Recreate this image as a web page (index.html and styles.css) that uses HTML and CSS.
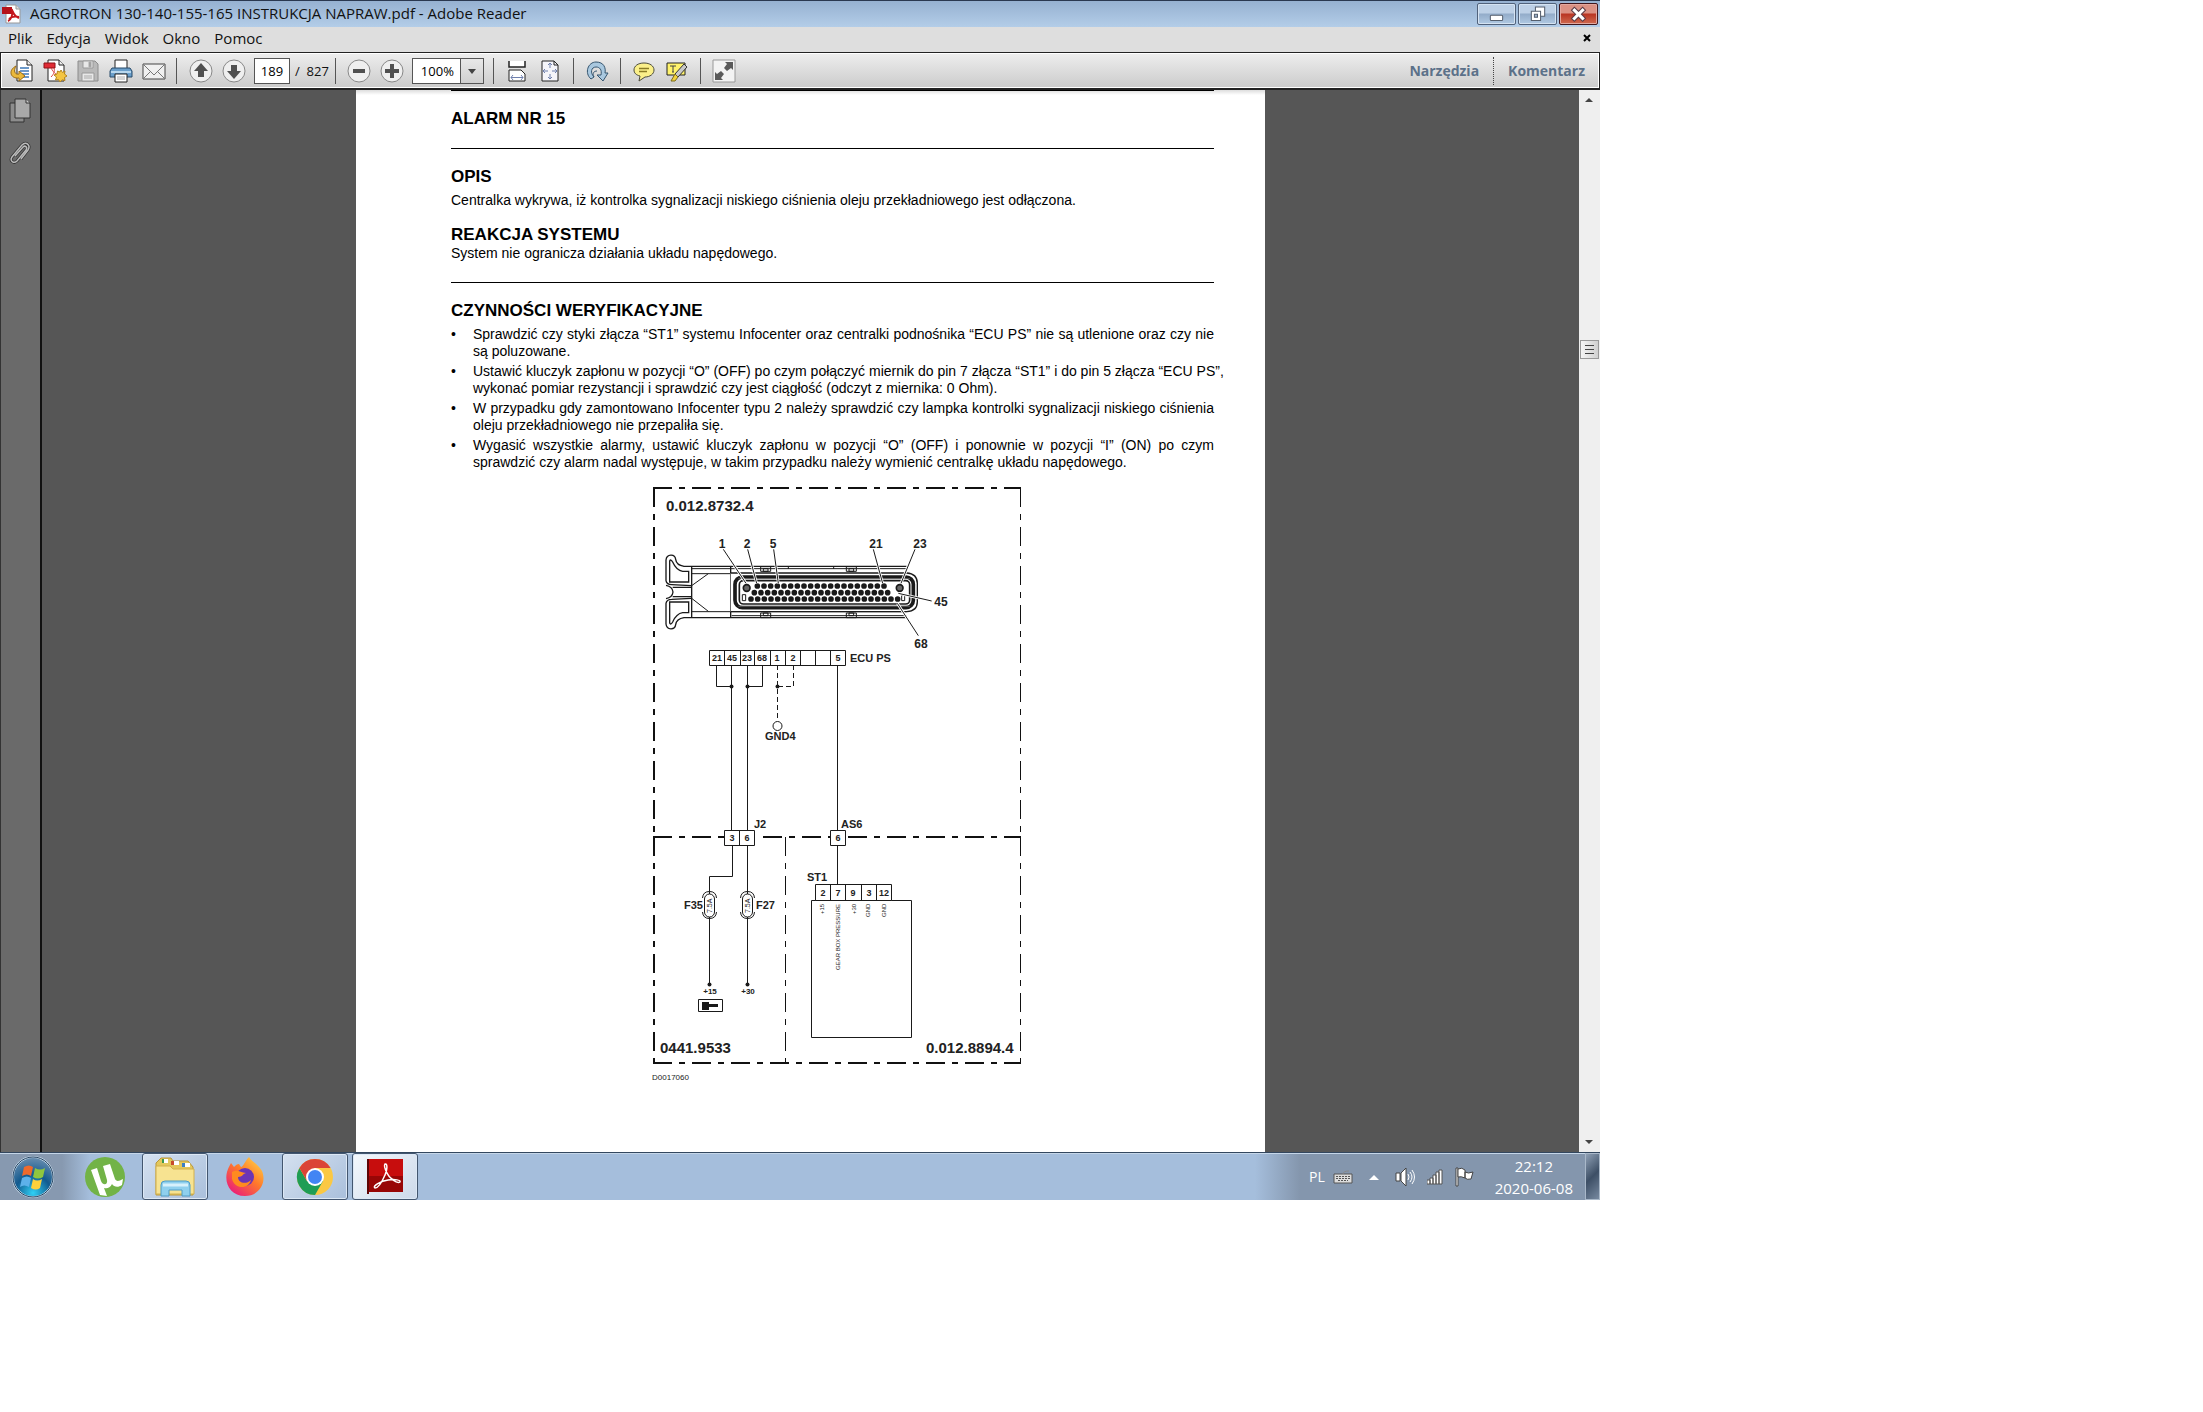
FILE: index.html
```
<!DOCTYPE html>
<html lang="pl">

<head>
    <meta charset="UTF-8">
    <meta name="viewport" content="width=device-width, initial-scale=1.0">
    <title>AGROTRON 130-140-155-165 INSTRUKCJA NAPRAW.pdf - Adobe Reader</title>
    <link rel="stylesheet" href="styles.css">
</head>

<body>
    <div class="desktop">
        <header class="titlebar">
            <svg class="app_icon" viewBox="0 0 20 20">
                <path d="M4 1h10l4 4v14H4z" fill="#fff" stroke="#999" />
                <path d="M14 1v4h4" fill="#ddd" stroke="#999" />
                <path d="M0 3h10v7H0z" fill="#b5121b" />
                <path d="M9 5c2 0 1 6 8 9M6 17c3-1 5-6 4-11M7 15c3-3 6-3 10-2" fill="none" stroke="#c4161c" stroke-width="2" />
            </svg>
            <span class="title">AGROTRON 130-140-155-165 INSTRUKCJA NAPRAW.pdf - Adobe Reader</span>
            <div class="window_buttons">
                <button aria-label="Minimalizuj"><svg viewBox="0 0 36 20"><rect x="12" y="11" width="12" height="5" rx="1" fill="#fff" stroke="#555f6e" /></svg></button>
                <button aria-label="Przywróć"><svg viewBox="0 0 36 20"><path d="M16 3h9v9h-9z" fill="#fff" stroke="#555f6e" /><path d="M12 7h9v9h-9z" fill="#fff" stroke="#555f6e" /><path d="M15 10h3v3h-3z" fill="#9fb4cc" stroke="#555f6e" /></svg></button>
                <button class="close" aria-label="Zamknij"><svg viewBox="0 0 36 20"><path d="M14 6l8 8M22 6l-8 8" stroke="#5b3b46" stroke-width="5" stroke-linecap="square" /><path d="M14 6l8 8M22 6l-8 8" stroke="#fff" stroke-width="3" stroke-linecap="square" /></svg></button>
            </div>
        </header>

        <nav class="menu">
            <button>Plik</button>
            <button>Edycja</button>
            <button>Widok</button>
            <button>Okno</button>
            <button>Pomoc</button>
            <button class="close_doc" aria-label="Zamknij dokument"><svg viewBox="0 0 8 8"><path d="M1 1l6 6M7 1L1 7" stroke="#000" stroke-width="2" /></svg></button>
        </nav>

        <div class="toolbar">
            <button aria-label="Otwórz">
                <svg viewBox="0 0 24 24">
                    <path d="M7 1h10l5 5v16H7z" fill="#fff" stroke="#222" />
                    <path d="M17 1v5h5" fill="#eee" stroke="#222" />
                    <path d="M10 9h9M10 12h9M10 15h9M12 18h7" stroke="#3d78b8" stroke-width="1.5" />
                    <path d="M6 7C-2 11 0 20 9 19v3l6-5-6-5v3c-4 1-6-3-3-8z" fill="#eab93c" stroke="#9a6b14" />
                </svg>
            </button>
            <button aria-label="Utwórz PDF">
                <svg viewBox="0 0 24 24">
                    <path d="M5 1h11l5 5v16H5z" fill="#fff" stroke="#222" />
                    <path d="M16 1v5h5" fill="#eee" stroke="#222" />
                    <path d="M1 4h11v5H1z" fill="#e02b35" stroke="#8d1218" />
                    <path d="M8 9c3 5 5 7 8 7M8 18c3-3 4-6 3-9" fill="none" stroke="#d44" />
                    <path d="M18 11l1.500 2.500L22 12l-.5 3L24 17l-2.500 1.500.5 3-3-.7L17 23l-1.500-2.500-3 .5 1-3L11 16l3-1 .5-3 2.500 1z" fill="#f4c542" stroke="#b5841b" />
                </svg>
            </button>
            <button aria-label="Zapisz" disabled>
                <svg viewBox="0 0 24 24">
                    <path d="M2 2h17l3 3v17H2z" fill="#b9b9b9" stroke="#8c8c8c" />
                    <path d="M7 2h10v7H7zM6 14h12v8H6z" fill="#e8e8e8" stroke="#999" />
                    <path d="M13 3h2v5h-2zM8 17h8M8 19h8" fill="#999" stroke="#aaa" />
                </svg>
            </button>
            <button aria-label="Drukuj">
                <svg viewBox="0 0 24 24">
                    <path d="M6 1h12v9H6z" fill="#fff" stroke="#222" />
                    <path d="M3 9h18l2 3v6H1v-6z" fill="#6a9fcb" stroke="#294a68" />
                    <path d="M2 13h20" stroke="#b9d8ee" stroke-width="2" />
                    <path d="M6 15h12v8H6z" fill="#fff" stroke="#222" />
                    <path d="M8 18h8M8 20h8" stroke="#aaa" />
                </svg>
            </button>
            <button aria-label="Wyślij e-mail">
                <svg viewBox="0 0 24 24">
                    <path d="M1 5h22v15H1z" fill="#f0f0f0" stroke="#444" />
                    <path d="M1 20l8-8M23 20l-8-8M1 5l11 11L23 5" fill="none" stroke="#777" />
                </svg>
            </button>
            <span class="sep"></span>
            <button aria-label="Poprzednia strona">
                <svg viewBox="0 0 24 24">
                    <circle cx="12" cy="12" r="11" fill="#efefef" stroke="#888" />
                    <path d="M12 4l7 8h-4v6H9v-6H5z" fill="#505050" />
                </svg>
            </button>
            <button aria-label="Następna strona">
                <svg viewBox="0 0 24 24">
                    <circle cx="12" cy="12" r="11" fill="#efefef" stroke="#888" />
                    <path d="M12 20l7-8h-4V6H9v6H5z" fill="#505050" />
                </svg>
            </button>
            <input class="page_nr" type="text" value="189" aria-label="Numer strony">
            <span class="pages">/&nbsp; 827</span>
            <span class="sep"></span>
            <button aria-label="Pomniejsz">
                <svg viewBox="0 0 24 24">
                    <circle cx="12" cy="12" r="11" fill="#efefef" stroke="#888" />
                    <path d="M6 10h12v4H6z" fill="#505050" />
                </svg>
            </button>
            <button aria-label="Powiększ">
                <svg viewBox="0 0 24 24">
                    <circle cx="12" cy="12" r="11" fill="#efefef" stroke="#888" />
                    <path d="M10 5h4v5h5v4h-5v5h-4v-5H5v-4h5z" fill="#505050" />
                </svg>
            </button>
            <div class="zoom">
                <select aria-label="Powiększenie">
                    <option>100%</option>
                </select>
                <svg viewBox="0 0 22 24"><path d="M7 10h8l-4 5z" fill="#444" /></svg>
            </div>
            <span class="sep"></span>
            <button aria-label="Dopasuj szerokość">
                <svg viewBox="0 0 24 24">
                    <path d="M4 2v6h16V2" fill="#fff" stroke="#222" stroke-width="1.500" />
                    <path d="M4 22V11h12l4 4v7z" fill="#fff" stroke="#222" />
                    <path d="M6 18.500h12M8 16l-2 2.500L8 21M16 16l2 2.500-2 2.500" fill="none" stroke="#6f80ad" />
                </svg>
            </button>
            <button aria-label="Dopasuj stronę">
                <svg viewBox="0 0 24 24">
                    <path d="M4 2h12l4 4v16H4z" fill="#f5f5fa" stroke="#222" />
                    <path d="M16 2v4h4" fill="none" stroke="#222" />
                    <path d="M12 4v5M10 6l2-2 2 2M12 15v5M10 18l2 2 2-2M5 12h5M7 10l-2 2 2 2M14 12h5M17 10l2 2-2 2" fill="none" stroke="#6f80ad" />
                </svg>
            </button>
            <span class="sep"></span>
            <button aria-label="Obróć">
                <svg viewBox="0 0 24 24">
                    <path d="M6 20C-1 14 3 3 11 3c8 0 10 6 9 11l3 0-5 8-6-6h4c1-5-1-8-5-8-5 0-6 6-2 10z" fill="#a9c8df" stroke="#35556f" />
                    <path d="M9 18c-2-4 0-6 3-6" fill="none" stroke="#35556f" />
                </svg>
            </button>
            <span class="sep"></span>
            <button aria-label="Dodaj notatkę">
                <svg viewBox="0 0 24 24">
                    <path d="M12 4c6 0 10 3 10 7s-4 7-9 7l-6 4 1-5c-4-1-6-3-6-6 0-4 4-7 10-7z" fill="#fbf08a" stroke="#4b4b3a" />
                    <path d="M7 9.500h10M7 12.500h8" stroke="#8a7b25" stroke-width="1.500" />
                </svg>
            </button>
            <button aria-label="Wyróżnij tekst">
                <svg viewBox="0 0 24 24">
                    <path d="M2 4h18v12H2z" fill="#fff36b" stroke="#222" />
                    <path d="M5 7h6M8 7v6M7 13h2" stroke="#444" />
                    <path d="M19 5l3 3-9 10-3-3z" fill="#c9c9c9" stroke="#333" />
                    <path d="M10 15l3 3-3 4-4 0z" fill="#f2d33c" stroke="#7a6a1a" />
                </svg>
            </button>
            <span class="sep"></span>
            <button aria-label="Tryb czytania">
                <svg viewBox="0 0 24 24">
                    <path d="M1 1h22v22H1z" fill="#f3f3f3" stroke="#999" />
                    <path d="M13 3h8v8l-2-2-4 3-3-3 3-4zM11 21H3v-8l2 2 4-3 3 3-3 4z" fill="#5a5a5a" />
                </svg>
            </button>
            <div class="panels">
                <button>Narzędzia</button>
                <button>Komentarz</button>
            </div>
        </div>

        <div class="viewer">
            <aside class="sidebar">
                <button aria-label="Miniatury stron">
                    <svg viewBox="0 0 24 26">
                        <path d="M2 5h14v19H2z" fill="#8d8d8d" stroke="#333" />
                        <path d="M7 1h11l4 4v15H7z" fill="#a9a9a9" stroke="#333" />
                        <path d="M18 1v4h4" fill="#ccc" stroke="#333" />
                    </svg>
                </button>
                <button aria-label="Załączniki">
                    <svg viewBox="0 0 24 26">
                        <path d="M7 16l8-9c2-2 5 0 3 3l-9 11c-3 3-8 0-5-4L14 5c4-4 9 0 6 5l-7 9" fill="none" stroke="#333" stroke-width="3" />
                        <path d="M7 16l8-9c2-2 5 0 3 3l-9 11c-3 3-8 0-5-4L14 5c4-4 9 0 6 5l-7 9" fill="none" stroke="#bbb" stroke-width="1.500" />
                    </svg>
                </button>
            </aside>

            <main class="document">
                <article class="page">
                    <h1>ALARM NR 15</h1>
                    <hr>
                    <h2>OPIS</h2>
                    <p class="spaced">Centralka wykrywa, iż kontrolka sygnalizacji niskiego ciśnienia oleju przekładniowego jest odłączona.</p>
                    <h2 class="reaction">REAKCJA SYSTEMU</h2>
                    <p>System nie ogranicza działania układu napędowego.</p>
                    <hr>
                    <h2>CZYNNOŚCI WERYFIKACYJNE</h2>
                    <ul>
                        <li>Sprawdzić czy styki złącza “ST1” systemu Infocenter oraz centralki podnośnika “ECU PS” nie są utlenione oraz czy nie są poluzowane.</li>
                        <li><div class="one_line">Ustawić kluczyk zapłonu w pozycji “O” (OFF) po czym połączyć miernik do pin 7 złącza “ST1” i do pin 5 złącza “ECU PS”,<br>wykonać pomiar rezystancji i sprawdzić czy jest ciągłość (odczyt z miernika: 0 Ohm).</div></li>
                        <li>W przypadku gdy zamontowano Infocenter typu 2 należy sprawdzić czy lampka kontrolki sygnalizacji niskiego ciśnienia oleju przekładniowego nie przepaliła się.</li>
                        <li>Wygasić wszystkie alarmy, ustawić kluczyk zapłonu w pozycji “O” (OFF) i ponownie w pozycji “I” (ON) po czym sprawdzić czy alarm nadal występuje, w takim przypadku należy wymienić centralkę układu napędowego.</li>
                    </ul>

                    <svg class="diagram" viewBox="643 480 379 610">
                        <!-- frame -->
                        <g class="frame">
                            <path d="M653 488H1021" />
                            <path d="M654 488V837" />
                            <path d="M654 837V1064" />
                            <path d="M653 837H724" />
                            <path d="M757 837H830" stroke-dashoffset="33" />
                            <path d="M848 837H1021" />
                            <path d="M653 1063H1021" />
                            <path class="thin" d="M1020.500 488V837" />
                            <path class="thin" d="M1020.500 837V1064" />
                            <path class="thin" d="M785.500 837V1064" />
                        </g>

                        <!-- connector, drawn at three times its size -->
                        <g class="connector" transform="translate(640 480) scale(.33333)">
                            <g id="handle">
                                <path d="M153 259H132C114 256 108 246 107 238C105 221 80 221 78 240V302Q80 314 95 314L153 317" />
                                <path d="M89 243Q92 236 98 246C106 264 114 272 128 274H146V306H89z" />
                                <path d="M78 316C94 319 98 326 99 336M98 322H153" />
                            </g>
                            <use href="#handle" transform="translate(0 672) scale(1 -1)" />
                            <path d="M153 259H800M155 259V413M272 259V413M153 413H800" />
                            <path class="fine" d="M153 266H800M153 281H800M153 395H800M275 407H800M155 317L205 281M155 355L205 394" />
                            <path class="fine" d="M362 260h30v14h-30zM370 266h14v8h-14zM619 260h30v14h-30zM627 266h14v8h-14zM362 399h30v14h-30zM370 399h14v8h-14zM619 399h30v14h-30zM627 399h14v8h-14zM445 259v8M581 259v8M442 281h12v6h-12zM442 388h12v6h-12z" />
                            <path d="M272 279H800Q832 281 832 310V365Q832 393 800 395H272" fill="#fff" />
                            <rect x="285" y="291" width="535" height="92" rx="22" stroke-width="11" />
                            <rect x="298" y="302" width="511" height="70" rx="12" stroke-width="5" />
                            <path d="M295 296H810M295 379H810" stroke="#777" stroke-width="2" />
                            <g class="pins">
                                <path d="M352 318H752" />
                                <path d="M343 338H763" />
                                <path d="M333 357H775" />
                            </g>
                            <circle cx="320" cy="324" r="10" fill="#666" stroke-width="5" />
                            <circle cx="779" cy="324" r="10" fill="#666" stroke-width="5" />
                            <path class="fine" d="M307 344h10v18h-10zM785 346h9v16h-9z" />
                            <path class="halo" d="M250 208L318 310M323 208L350 310M401 208L415 310M700 208L728 310M825 208L783 310M875 363L775 340M835 467L772 370" />
                            <path class="fine" d="M250 208L318 310M323 208L350 310M401 208L415 310M700 208L728 310M825 208L783 310M875 363L775 340M835 467L772 370" />
                        </g>

                        <!-- wires -->
                        <g class="wires">
                            <path d="M716.500 665V686.500H731.500M762.500 665V686.500H747.500" />
                            <path d="M731.500 665V830M747.500 665V830M837.500 665V830" />
                            <path class="dashed" d="M777.500 665V721" />
                            <path class="dashed" d="M793.500 665V686.500H778" />
                            <circle cx="777.500" cy="726" r="4.500" />
                            <path d="M732.500 845V876.500H709.500V894M747.500 845V894M709.500 917V984M747.500 917V984M837.500 845V884" />
                        </g>

                        <!-- terminals -->
                        <g class="boxes">
                            <path d="M709.500 650.500H845.500V665.500H709.500z" />
                            <path d="M724.500 650V665M740.500 650V665M754.500 650V665M770.500 650V665M785.500 650V665M800.500 650V665M815.500 650V665M830.500 650V665" />
                            <path d="M724.500 830.500H754.500V845.500H724.500zM739.500 830V845" />
                            <path d="M830.500 830.500H845.500V845.500H830.500z" />
                            <path d="M811.500 900.500H911.500V1037.500H811.500z" />
                            <path d="M815.500 884.500H891.500V900.500H815.500zM830.500 884V900M845.500 884V900M861.500 884V900M876.500 884V900" />
                            <path d="M698.500 999.500H722.500V1011.500H698.500z" />
                        </g>
                        <g class="dots">
                            <circle cx="731.500" cy="686.500" r="2" />
                            <circle cx="747.500" cy="686.500" r="2" />
                            <circle cx="777.500" cy="686.500" r="2" />
                            <circle cx="709.500" cy="984.500" r="2" />
                            <circle cx="747.500" cy="984.500" r="2" />
                            <path d="M702 1002h7v2h9v3h-9v3h-7z" />
                        </g>
                        <g class="fuse">
                            <rect x="704.500" y="894" width="10" height="23" rx="5" />
                            <path d="M702.500 898Q703 891.500 709.500 891.500T716.500 898M702.500 912Q703 918.500 709.500 918.500T716.500 912" />
                            <rect x="742.500" y="894" width="10" height="23" rx="5" />
                            <path d="M740.500 898Q741 891.500 747.500 891.500T754.500 898M740.500 912Q741 918.500 747.500 918.500T754.500 912" />
                        </g>

                        <!-- captions -->
                        <g class="number">
                            <text x="666" y="511">0.012.8732.4</text>
                            <text x="660" y="1053">0441.9533</text>
                            <text x="926" y="1053">0.012.8894.4</text>
                        </g>
                        <g class="pin_nr">
                            <text x="722" y="548">1</text>
                            <text x="747" y="548">2</text>
                            <text x="773" y="548">5</text>
                            <text x="876" y="548">21</text>
                            <text x="920" y="548">23</text>
                            <text x="941" y="606">45</text>
                            <text x="921" y="648">68</text>
                        </g>
                        <g class="box_nr">
                            <text x="717" y="661">21</text>
                            <text x="732" y="661">45</text>
                            <text x="747" y="661">23</text>
                            <text x="762" y="661">68</text>
                            <text x="777" y="661">1</text>
                            <text x="793" y="661">2</text>
                            <text x="838" y="661">5</text>
                            <text x="732" y="841">3</text>
                            <text x="747" y="841">6</text>
                            <text x="838" y="841">6</text>
                            <text x="823" y="896">2</text>
                            <text x="838" y="896">7</text>
                            <text x="853" y="896">9</text>
                            <text x="869" y="896">3</text>
                            <text x="884" y="896">12</text>
                        </g>
                        <g class="label">
                            <text x="850" y="662">ECU PS</text>
                            <text x="765" y="740">GND4</text>
                            <text x="754" y="828">J2</text>
                            <text x="841" y="828">AS6</text>
                            <text x="807" y="881">ST1</text>
                            <text x="684" y="909">F35</text>
                            <text x="756" y="909">F27</text>
                        </g>
                        <g class="supply">
                            <text x="710" y="994">+15</text>
                            <text x="748" y="994">+30</text>
                        </g>
                        <g class="rating">
                            <text transform="translate(712 913) rotate(-90)">7.5A</text>
                            <text transform="translate(750 913) rotate(-90)">7.5A</text>
                        </g>
                        <g class="signal_name">
                            <text transform="translate(824 914) rotate(-90)">+15</text>
                            <text transform="translate(840 970) rotate(-90)">GEAR BOX PRESSURE</text>
                            <text transform="translate(856 914) rotate(-90)">+30</text>
                            <text transform="translate(870 917) rotate(-90)">GND</text>
                            <text transform="translate(886 917) rotate(-90)">GND</text>
                        </g>
                        <text class="drawing_nr" x="652" y="1080">D0017060</text>
                    </svg>
                </article>
            </main>

            <div class="scrollbar">
                <svg viewBox="0 0 21 20"><path d="M6 12h8l-4-4z" fill="#444" /></svg>
                <div class="thumb"><span></span><span></span><span></span></div>
                <svg viewBox="0 0 21 20"><path d="M6 8h8l-4 4z" fill="#444" /></svg>
            </div>
        </div>

        <footer class="taskbar">
            <button class="start" aria-label="Start">
                <svg viewBox="0 0 44 44">
                    <defs>
                        <radialGradient id="orb" cx=".5" cy=".9" r=".9">
                            <stop offset="0" stop-color="#2fd0f5" />
                            <stop offset=".5" stop-color="#125a8f" />
                            <stop offset="1" stop-color="#6c8fb0" />
                        </radialGradient>
                    </defs>
                    <circle cx="22" cy="22" r="20" fill="url(#orb)" stroke="#cfe3f2" stroke-width="2" />
                    <circle cx="22" cy="22" r="20" fill="none" stroke="#23415f" />
                    <path d="M13 12q5-3 9 0l-2 9q-4-3-9 0z" fill="#ee6a2c" />
                    <path d="M24 13q5 3 10 0l-2 9q-5 3-10 0z" fill="#8fc63f" />
                    <path d="M11 23q5-3 9 0l-2 9q-5-3-9 0z" fill="#5db1ea" />
                    <path d="M22 24q4 3 9 0l-2 9q-4 3-9 0z" fill="#fcd13a" />
                </svg>
            </button>
            <button aria-label="µTorrent">
                <svg viewBox="0 0 44 44">
                    <circle cx="22" cy="22" r="20" fill="#72b347" />
                    <path d="M8 15l6-2 4 13c2 5 7 4 6-1l-4-14 7-2 5 15c1 2 3 3 8 0l-1 6c-4 3-8 2-10-1-2 4-5 5-8 4l3 8-7-1z" fill="#fff" />
                </svg>
            </button>
            <button class="open" aria-label="Eksplorator Windows">
                <svg viewBox="0 0 44 44">
                    <path d="M5 6l3-3h10l2 3h15l5 6v28H3V8z" fill="#e3c85c" stroke="#b9963a" />
                    <path d="M9 4h6v4H9zM18 6h8v4h-8zM29 8h8v4h-8z" fill="#fff" />
                    <path d="M9 4h2v4H9z" fill="#3c9a4b" />
                    <path d="M18 6h3v4h-3z" fill="#c74b2c" />
                    <path d="M29 8h3v4h-3z" fill="#3c7fc4" />
                    <path d="M3 11h14l3 3h21v25H3z" fill="#f7e391" stroke="#d2b04c" />
                    <path d="M8 41V30q0-4 4-4h21q4 0 4 4v11h-8v-6H16v6z" fill="#8fd0ee" stroke="#4f9cc6" />
                    <path d="M10 30h25" stroke="#d6f1fc" stroke-width="3" />
                </svg>
            </button>
            <button aria-label="Firefox">
                <svg viewBox="0 0 44 44">
                    <defs>
                        <linearGradient id="fox" x1="1" y1="0" x2=".2" y2="1">
                            <stop offset="0" stop-color="#ffe14a" />
                            <stop offset=".5" stop-color="#ff7a2a" />
                            <stop offset="1" stop-color="#e9197e" />
                        </linearGradient>
                    </defs>
                    <path d="M26 2c3 5 9 7 13 14 5 12-3 25-17 25C8 41 1 29 4 17c1-4 3-7 4-9l3 4c2-2 3-3 5-3l2 3c2 0 4-6 8-10z" fill="url(#fox)" />
                    <circle cx="22" cy="22" r="9" fill="#6b35b5" />
                    <path d="M9 17c5-3 8 0 14 1-4 1-3 4-8 4 0 6 8 8 13 3-2 9-16 10-19-1z" fill="#ff8a1f" />
                </svg>
            </button>
            <button class="open" aria-label="Google Chrome">
                <svg viewBox="0 0 44 44">
                    <circle cx="22" cy="22" r="18" fill="#fbc843" />
                    <path d="M6.400 13A18 18 0 0 0 22 40L30 26L14 26z" fill="#1f9d55" />
                    <path d="M22 13H37.600A18 18 0 0 0 6.400 13L14 26z" fill="#db4437" />
                    <circle cx="22" cy="22" r="9" fill="#fff" />
                    <circle cx="22" cy="22" r="7" fill="#4285f4" />
                </svg>
            </button>
            <button class="open active" aria-label="Adobe Reader">
                <svg viewBox="0 0 44 44">
                    <path d="M4 4h2v35H4z" fill="#5e0505" />
                    <path d="M6 4h34v33H6z" fill="#c70d0d" />
                    <path d="M6 21h34v16H6z" fill="#980606" />
                    <path d="M22 9c3-1 2 7 0 11-3 7-7 13-10 13-3-2 6-7 13-8 7-1 13 0 12 2-3 2-11-4-13-9-2-4-3-8-2-9z" fill="none" stroke="#fff" stroke-width="1.500" />
                </svg>
            </button>
            <div class="tray">
                <span class="lang">PL</span>
                <svg class="keyboard" viewBox="0 0 20 14"><path d="M1 4h18v9H1z" fill="#ddd" stroke="#555" /><path d="M3 6.500h14M3 8.500h14M5 10.500h10" stroke="#555" stroke-dasharray="2 1" /><path d="M10 4q0-3 6-3" fill="none" stroke="#888" /></svg>
                <svg class="arrow" viewBox="0 0 10 14"><path d="M0 10h10L5 5z" fill="#fff" /></svg>
                <svg class="sound" viewBox="0 0 20 20"><path d="M1 6h4v8H1zM6 6l5-5v18l-5-5z" fill="#fff" stroke="#444" /><path d="M13 7q2 3 0 6M15 5q4 5 0 10M17 3q5 7 0 14" fill="none" stroke="#fff" /></svg>
                <svg class="signal" viewBox="0 0 16 20"><path d="M0 13h3v4H0zM3 11h3v6H3zM6 8h3v9H6zM9 5h3v12H9zM12 3h3v14h-3z" fill="#fff" stroke="#555" /></svg>
                <svg class="flag" viewBox="0 0 20 20"><path d="M1 1h2v18H1z" fill="#fff" stroke="#444" /><path d="M3 2q4-2 7 1v8q-4-2-7-1zM10 5q3 2 8 0l-2 7q-4 1-6-1z" fill="#fff" stroke="#444" /></svg>
                <div class="clock"><span>22:12</span><span>2020-06-08</span></div>
                <button class="show_desktop" aria-label="Pokaż pulpit"></button>
            </div>
        </footer>
    </div>
</body>

</html>
```
FILE: styles.css
```
* {
    box-sizing: border-box;
}

body {
    margin: 0;
    background: white;
    font-family: "Open Sans", "Noto Sans", sans-serif;
    color: #111;
}

button {
    padding: 0;
    border: none;
    background: none;
    font: inherit;
    color: inherit;
}

svg {
    display: block;
}

.desktop {
    max-width: 1600px;
}

/* title bar and menu */

.titlebar {
    display: flex;
    align-items: center;
    gap: 8px;
    height: 27px;
    padding: 0 2px;
    border-top: 1px solid #2a3850;
    background: linear-gradient(#96b1d1, #b3cde8);
}

.app_icon {
    width: 20px;
    height: 20px;
}

.title {
    flex: 1;
    font-size: 15px;
    line-height: 20px;
    padding-bottom: 2px;
}

.window_buttons {
    display: flex;
    gap: 2px;
}

.window_buttons button {
    width: 39px;
    height: 22px;
    border: 1px solid #51627b;
    border-radius: 2px;
    box-shadow: inset 0 0 0 1px #d5e3f2;
    background: linear-gradient(#bdd0e6 45%, #93acc9 50%, #b0c9e3);
}

.window_buttons .close {
    border-color: #40161c;
    box-shadow: inset 0 0 0 1px #e3a79e;
    background: linear-gradient(#db9184 45%, #b93422 50%, #cf6a50);
}

.menu {
    display: flex;
    align-items: center;
    gap: 14px;
    height: 25px;
    padding: 0 9px 3px 8px;
    background: #dedede;
    font-size: 15px;
    line-height: 20px;
}

.close_doc {
    width: 8px;
    margin-left: auto;
}

/* toolbar */

.toolbar {
    display: flex;
    align-items: center;
    height: 38px;
    padding-left: 4px;
    border: 1px solid #222;
    border-bottom-width: 2px;
    box-shadow: inset 0 0 0 1px white;
    background: linear-gradient(#eee, #cbcbcb);
    font-size: 13px;
}

.toolbar > button {
    display: flex;
    justify-content: center;
    width: 33px;
}

.toolbar > button svg {
    width: 24px;
    height: 24px;
}

.sep {
    width: 1px;
    height: 26px;
    margin: 0 7px 0 6px;
    background: #555;
}

.page_nr {
    width: 36px;
    height: 26px;
    margin-left: 4px;
    padding: 0;
    border: 1px solid #555;
    background: white;
    font: inherit;
    text-align: center;
}

.pages {
    margin-left: 5px;
}

.zoom {
    display: flex;
    height: 26px;
    margin: 0 3px;
    border: 1px solid #555;
}

.zoom select {
    width: 48px;
    padding: 0 0 0 8px;
    border: none;
    border-right: 1px solid #555;
    border-radius: 0;
    appearance: none;
    background: white;
    font: inherit;
}

.zoom svg {
    width: 22px;
    height: 24px;
}

.panels {
    display: flex;
    margin-left: auto;
    color: #5c7189;
    font-size: 14px;
    font-weight: 700;
}

.panels button {
    height: 28px;
    padding: 0 14px;
}

.panels button + button {
    border-left: 1px dotted #444;
}

/* document */

.viewer {
    display: flex;
    background: #565656;
}

.sidebar {
    display: flex;
    flex-direction: column;
    align-items: center;
    gap: 16px;
    width: 42px;
    padding: 8px 2px 0 0;
    border-right: 2px solid #111;
    border-left: 1px solid #333;
    background: #6a6a6a;
}

.sidebar svg {
    width: 24px;
    height: 26px;
}

.document {
    display: flex;
    flex: 1;
    justify-content: center;
}

.page {
    width: 909px;
    padding: 0 51px 62px 95px;
    background: linear-gradient(#ddd, white 5px);
    color: black;
    font-family: "Liberation Sans", Arial, sans-serif;
    font-size: 14px;
    line-height: 17px;
}

h1,
h2 {
    margin: 0;
    font-size: 17px;
    line-height: 20px;
}

h1 {
    padding-top: 18px;
    border-top: 1px solid black;
}

h2.reaction {
    margin-top: 16px;
}

hr {
    height: 1px;
    margin: 19px 0 18px;
    border: none;
    background: black;
}

p {
    margin: 0;
}

p + hr {
    margin-top: 20px;
}

p.spaced {
    margin-top: 5px;
}

ul {
    display: grid;
    grid-template-columns: minmax(0, 1fr);
    gap: 3px;
    margin: 5px 0 9px;
    padding: 0;
    list-style: none;
    text-align: justify;
}

li {
    display: flex;
}

li::before {
    content: "•";
    flex: 0 0 22px;
}

.one_line {
    white-space: nowrap;
}

.diagram {
    width: 379px;
    margin: 0 auto;
}

.diagram text {
    fill: #222;
    font-weight: 700;
}

.frame path {
    fill: none;
    stroke: #111;
    stroke-width: 2;
    stroke-dasharray: 19 7 6 7;
}

.frame .thin {
    stroke-width: 1;
}

.connector {
    fill: none;
    stroke: #1a1a1a;
    stroke-width: 4;
}

.fine {
    stroke-width: 3;
}

.pins {
    stroke-width: 17;
    stroke-linecap: round;
    stroke-dasharray: 0 20;
}

.halo {
    stroke: white;
    stroke-width: 8;
}

.wires,
.boxes,
.fuse {
    fill: none;
    stroke: #1a1a1a;
}

.boxes {
    fill: white;
}

.dashed {
    stroke-dasharray: 5 3;
}

.dots {
    fill: #1a1a1a;
}

.number {
    font-size: 15px;
}

.pin_nr {
    font-size: 12px;
    text-anchor: middle;
}

.box_nr {
    font-size: 9px;
    text-anchor: middle;
}

.label {
    font-size: 11px;
}

.supply {
    font-size: 8px;
    text-anchor: middle;
}

.rating {
    font-size: 7px;
}

.signal_name {
    font-size: 6px;
}

.diagram .rating text,
.diagram .signal_name text,
.diagram .drawing_nr {
    font-weight: 400;
}

.drawing_nr {
    font-size: 8px;
}

.scrollbar {
    display: flex;
    flex-direction: column;
    width: 21px;
    background: #efefef;
}

.scrollbar svg {
    width: 21px;
    height: 20px;
}

.thumb {
    display: flex;
    flex-direction: column;
    align-items: center;
    justify-content: center;
    gap: 3px;
    height: 19px;
    margin: 230px 1px auto;
    border: 1px solid #999;
    background: linear-gradient(90deg, #f5f5f5, #d0d0d0);
}

.thumb span {
    width: 9px;
    height: 1px;
    background: #444;
}

/* taskbar */

.taskbar {
    display: flex;
    align-items: center;
    height: 48px;
    border-top: 1px solid #33475f;
    box-shadow: inset 0 1px #c5d6e8;
    background: linear-gradient(90deg, #8799b0 0, #8799b0 62px, #a5bedc 90px, #a5bedc calc(100% - 345px), #8496ad calc(100% - 300px));
}

.taskbar > button {
    display: flex;
    align-items: center;
    justify-content: center;
    width: 66px;
    height: 47px;
    margin-right: 4px;
}

.taskbar > button.start {
    margin-right: 6px;
}

.taskbar > button svg {
    width: 44px;
    height: 44px;
}

.taskbar .open {
    border: 1px solid #43566f;
    border-radius: 3px;
    box-shadow: inset 0 0 0 1px #dce8f5;
    background: linear-gradient(135deg, #d5e1f0, #a9bfdb);
}

.taskbar .active {
    background: linear-gradient(135deg, #f4f8fc, #ccd9ea);
}

.tray {
    display: flex;
    align-items: center;
    gap: 12px;
    height: 47px;
    margin-left: auto;
    color: white;
    font-size: 14px;
}

.keyboard {
    width: 20px;
    height: 14px;
    margin-left: -4px;
}

.arrow {
    width: 10px;
    height: 14px;
    margin: 0 4px;
}

.sound,
.flag {
    width: 20px;
    height: 20px;
}

.signal {
    width: 16px;
    height: 20px;
}

.clock {
    display: flex;
    flex-direction: column;
    align-items: center;
    margin-left: 8px;
    font-size: 15px;
    line-height: 22px;
}

.show_desktop {
    width: 15px;
    height: 47px;
    border: 1px solid #a9b8c9;
    background: linear-gradient(135deg, #8fa0b5, #3d4f66 50%, #7789a0);
}
```
